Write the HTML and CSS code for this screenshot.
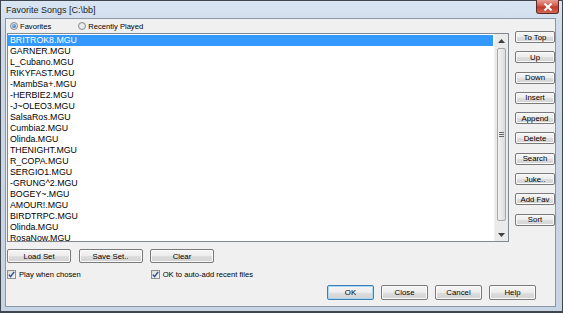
FILE: index.html
```html
<!DOCTYPE html>
<html>
<head>
<meta charset="utf-8">
<link rel="stylesheet" href="styles.css">
</head>
<body>
<div class="window">
  <div class="titlebar">
    <span class="title">Favorite Songs [C:\bb]</span>
    <div class="close"><svg width="10" height="8" viewBox="0 0 10 8"><path d="M1.5 0.5 L8.5 7.5 M8.5 0.5 L1.5 7.5" stroke="#fff" stroke-width="2"/></svg></div>
  </div>
  <div class="client">
    <div class="top">
      <div class="leftcol">
        <div class="radios">
          <label class="radio"><span class="rdot on"></span>Favorites</label>
          <label class="radio second"><span class="rdot"></span>Recently Played</label>
        </div>
        <div class="listbox">
          <div class="items">
            <div class="item sel">BRITROK8.MGU</div>
            <div class="item">GARNER.MGU</div>
            <div class="item">L_Cubano.MGU</div>
            <div class="item">RIKYFAST.MGU</div>
            <div class="item">-MambSa+.MGU</div>
            <div class="item">-HERBIE2.MGU</div>
            <div class="item">-J~OLEO3.MGU</div>
            <div class="item">SalsaRos.MGU</div>
            <div class="item">Cumbia2.MGU</div>
            <div class="item">Olinda.MGU</div>
            <div class="item">THENIGHT.MGU</div>
            <div class="item">R_COPA.MGU</div>
            <div class="item">SERGIO1.MGU</div>
            <div class="item">-GRUNG^2.MGU</div>
            <div class="item">BOGEY~.MGU</div>
            <div class="item">AMOUR!.MGU</div>
            <div class="item">BIRDTRPC.MGU</div>
            <div class="item">Olinda.MGU</div>
            <div class="item">RosaNow.MGU</div>
          </div>
          <div class="scrollbar">
            <div class="arrow"><svg width="7" height="4" viewBox="0 0 7 4"><path d="M0 4 L3.5 0 L7 4 Z" fill="#404040"/></svg></div>
            <div class="thumb"><span class="grip"></span></div>
            <div class="track"></div>
            <div class="arrow"><svg width="7" height="4" viewBox="0 0 7 4"><path d="M0 0 L3.5 4 L7 0 Z" fill="#404040"/></svg></div>
          </div>
        </div>
      </div>
      <div class="rightcol">
        <button class="btn side">To Top</button>
        <button class="btn side">Up</button>
        <button class="btn side">Down</button>
        <button class="btn side">Insert</button>
        <button class="btn side">Append</button>
        <button class="btn side">Delete</button>
        <button class="btn side">Search</button>
        <button class="btn side">Juke..</button>
        <button class="btn side">Add Fav</button>
        <button class="btn side">Sort</button>
      </div>
    </div>
    <div class="setbtns">
      <button class="btn set">Load Set</button>
      <button class="btn set">Save Set..</button>
      <button class="btn set">Clear</button>
    </div>
    <div class="checks">
      <label class="check"><span class="cbox"><svg width="7" height="7" viewBox="0 0 7 7"><path d="M0.8 3.6 L2.6 5.6 L6.2 0.8" stroke="#2a4e8c" stroke-width="1.4" fill="none"/></svg></span>Play when chosen</label>
      <label class="check second"><span class="cbox"><svg width="7" height="7" viewBox="0 0 7 7"><path d="M0.8 3.6 L2.6 5.6 L6.2 0.8" stroke="#2a4e8c" stroke-width="1.4" fill="none"/></svg></span>OK to auto-add recent files</label>
    </div>
    <div class="actions">
      <button class="btn act default">OK</button>
      <button class="btn act">Close</button>
      <button class="btn act">Cancel</button>
      <button class="btn act">Help</button>
    </div>
  </div>
</div>
</body>
</html>
```
FILE: styles.css
```css
* { box-sizing: border-box; }
html, body { margin: 0; padding: 0; background: #fff; }
body { font-family: "Liberation Sans", Arial, sans-serif; }

.window {
  width: 563px;
  height: 313px;
  border: 1px solid #40464e;
  border-bottom-width: 2px;
  background: linear-gradient(#d9e5f2, #cad8e8 40px, #c6d4e4);
  padding: 0 6px 4px 4px;
  display: flex;
  flex-direction: column;
}

.titlebar {
  height: 17px;
  display: flex;
  align-items: flex-start;
}
.title {
  font-size: 9px;
  color: #1e1e1e;
  padding: 4px 0 0 1px;
}
.close {
  margin-left: auto;
  margin-right: -3px;
  width: 23px;
  height: 14px;
  margin-top: -1px;
  border: 1px solid #5b2a26;
  border-top: none;
  border-radius: 0 0 3px 3px;
  background: linear-gradient(#e8a093, #d0594b 45%, #c23a2c 55%, #d26a55);
  display: flex;
  align-items: center;
  justify-content: center;
}

.client {
  flex: 1;
  background: #f0f0f0;
  border: 1px solid #8a97a6;
  padding: 0 0 0 1px;
  display: flex;
  flex-direction: column;
  font-size: 7.6px;
  color: #000;
}

.top { display: flex; }
.leftcol { width: 502px; display: flex; flex-direction: column; }
.radios { height: 14px; display: flex; align-items: center; }
.radio { display: flex; align-items: center; }
.radio:first-child { margin-left: 3px; }
.radio.second { margin-left: 27px; }
.rdot {
  width: 8px; height: 8px; border-radius: 50%;
  border: 1px solid #8a8f96;
  background: radial-gradient(#f4f4f4, #d4d6d8);
  margin-right: 2px;
  display: flex; align-items: center; justify-content: center;
}
.rdot.on::after {
  content: ""; width: 4px; height: 4px; border-radius: 50%;
  background: radial-gradient(circle at 40% 35%, #8fc3f0, #1f5f9e);
}

.listbox {
  height: 209px;
  border: 1px solid #828790;
  background: #fff;
  display: flex;
  overflow: hidden;
}
.items { flex: 1; padding: 1px 1px 0 0; overflow: hidden; }
.item {
  height: 11px;
  line-height: 11px;
  font-size: 8.8px;
  padding-left: 2px;
  white-space: nowrap;
  color: #000;
}
.item.sel { background: #3399ff; color: #fff; }

.scrollbar {
  width: 14px;
  background: #eaeaea;
  border-left: 1px solid #f2f2f2;
  display: flex;
  flex-direction: column;
}
.arrow {
  height: 13px;
  display: flex; align-items: center; justify-content: center;
}
.thumb {
  height: 173px;
  margin: 1px 2px 0 2px;
  border: 1px solid #a3a7ad;
  border-radius: 2px;
  background: linear-gradient(90deg, #f3f3f3, #dcdcdc);
  display: flex; align-items: center; justify-content: center;
}
.grip {
  width: 5px; height: 5px;
  border-top: 1px solid #666; border-bottom: 1px solid #666;
  position: relative;
}
.grip::after {
  content: ""; position: absolute; left: 0; right: 0; top: 1px; height: 1px; background: #666;
}
.track { flex: 1; }

.rightcol {
  margin-left: 6px;
  width: 40px;
  padding-top: 12px;
  display: flex;
  flex-direction: column;
  gap: 8.3px;
}

.btn {
  font-family: "Liberation Sans", Arial, sans-serif;
  font-size: 7.8px;
  color: #000;
  border: 1px solid #7a7a7a;
  border-radius: 2px;
  background: linear-gradient(#f6f6f6, #ececec 50%, #dedede 51%, #d2d2d2);
  padding: 0;
  margin: 0;
  box-shadow: inset 0 0 0 1px #fafafa;
}
.btn.side { height: 12px; width: 40px; }

.setbtns { display: flex; margin-top: 7px; gap: 7.5px; }
.btn.set { width: 64px; height: 14px; }

.checks { display: flex; margin-top: 6px; height: 10px; align-items: center; }
.check { display: flex; align-items: center; }
.check.second { margin-left: 70px; }
.cbox {
  width: 9px; height: 9px;
  border: 1px solid #8e8f8f;
  background: linear-gradient(135deg, #dcdcdc, #f6f6f6);
  margin-right: 3px;
  display: flex; align-items: center; justify-content: center;
}

.actions {
  display: flex;
  justify-content: flex-end;
  gap: 7px;
  margin-top: 6px;
  padding-right: 19px;
}
.btn.act { width: 47px; height: 15px; }
.btn.default { border-color: #3c7fb1; box-shadow: inset 0 0 0 1px #a8d8f2; }
```
